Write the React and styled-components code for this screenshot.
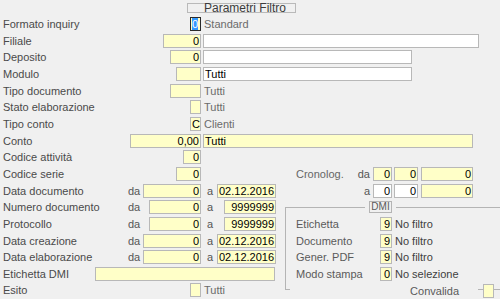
import React from "react";
import styled, { createGlobalStyle } from "styled-components";

const Global = createGlobalStyle`
  html, body { margin: 0; padding: 0; background: #f0f0f0; }
  body { font-family: "Liberation Sans", Arial, sans-serif; font-size: 11px; color: #4a4a4a; }
  * { box-sizing: border-box; }
`;

const ROW = 16.667;

const Page = styled.div`
  position: relative;
  width: 500px;
  height: 299px;
  overflow: hidden;
  background: #f0f0f0;
`;

const TitleRow = styled.div`
  height: 15.67px;
  padding-top: 2.5px;
`;

const TitleBox = styled.div`
  margin-left: 187px;
  width: 109px;
  height: 10px;
  border: 1px solid #b9b9b9;
  padding-left: 16px;
  font-size: 12px;
  line-height: 9px;
  color: #3c3c3c;
  white-space: nowrap;
  overflow: visible;
`;

const Row = styled.div`
  display: flex;
  align-items: center;
  height: ${ROW}px;
  gap: 2px;
`;

const Left = styled.div`
  display: flex;
  align-items: center;
  width: 201px;
  flex-shrink: 0;
`;

const Label = styled.span`
  padding-left: 3px;
  white-space: nowrap;
  color: #4a4a4a;
  ${(p) => (p.$w ? `width: ${p.$w}px; flex-shrink: 0;` : "flex: 1;")}
`;

const Field = styled.div`
  width: ${(p) => p.$w}px;
  height: 14px;
  flex-shrink: 0;
  border: 1px solid ${(p) => (p.$focus ? "#2a2a2a" : "#b8b8b8")};
  background: ${(p) => (p.$white ? "#ffffff" : "#ffffc8")};
  color: #000;
  font-size: 11px;
  line-height: 12px;
  padding: 0 1px 0 ${(p) => (p.$focus ? "1px" : "1px")};
  text-align: ${(p) => (p.$left ? "left" : "right")};
  white-space: nowrap;
  overflow: hidden;
`;

const Sel = styled.span`
  display: block;
  height: 12px;
  background: #3399ff;
  color: #fff;
  text-align: center;
  margin-right: 1px;
`;

const Info = styled.span`
  padding-left: 1px;
  color: ${(p) => (p.$dark ? "#404040" : "#6b6b6b")};
  white-space: nowrap;
`;

const DaGroup = styled.div`
  display: flex;
  align-items: center;
  justify-content: space-between;
  width: 73px;
  flex-shrink: 0;
`;

const AGroup = styled.div`
  display: flex;
  align-items: center;
  justify-content: space-between;
  width: 73px;
  flex-shrink: 0;
  padding-left: 4px;
`;

const Conj = styled.span`
  color: #555;
`;

const Lower = styled.div`
  display: flex;
`;

const LeftCol = styled.div`
  width: 283px;
  flex-shrink: 0;
`;

const RightCol = styled.div`
  flex: 1;
`;

const CronoRow = styled.div`
  display: flex;
  align-items: center;
  height: ${ROW}px;
`;

const CronoLabel = styled.span`
  margin-left: 13px;
  width: 61px;
  color: #666;
  white-space: nowrap;
`;

const CronoPrefix = styled.span`
  width: 13px;
  text-align: right;
  color: #555;
  margin-right: 3px;
`;

const Gap = styled.span`
  width: ${(p) => p.$w}px;
  flex-shrink: 0;
`;

const GroupBox = styled.div`
  position: relative;
  margin-left: 2px;
  margin-top: 7.67px;
  width: 240px;
  border: 1px solid #b4b4b4;
  border-right: none;
  padding-top: 8px;
  padding-bottom: 7.33px;
`;

const Legend = styled.span`
  position: absolute;
  top: -6.5px;
  left: 79px;
  padding: 0 4px;
  background: #f0f0f0;
`;

const LegendBox = styled.span`
  display: block;
  width: 23px;
  height: 12px;
  border: 1px solid #b4b4b4;
  font-size: 10px;
  line-height: 10px;
  color: #5a5a5a;
  text-align: center;
`;

const GroupRow = styled.div`
  display: flex;
  align-items: center;
  height: ${ROW}px;
  gap: 2px;
`;

const GroupLabel = styled.span`
  padding-left: 10px;
  width: 92px;
  color: #5a5a5a;
  white-space: nowrap;
`;

const Convalida = styled.div`
  position: absolute;
  left: 4px;
  bottom: -9.67px;
  height: ${ROW}px;
  display: flex;
  align-items: center;
`;

const ConvLabel = styled.span`
  width: 188px;
  height: 100%;
  display: flex;
  align-items: center;
  justify-content: flex-end;
  padding-right: 19px;
  background: #f0f0f0;
  color: #5a5a5a;
`;

const ConvBox = styled(Field)`
  margin-left: 5px;
  height: 14px;
`;

function DaRow({ label, daW, da, aW, a }) {
  return (
    <Row>
      <Left>
        <Label>{label}</Label>
        <DaGroup>
          <Conj>da</Conj>
          <Field $w={daW}>{da}</Field>
        </DaGroup>
      </Left>
      <AGroup>
        <Conj>a</Conj>
        <Field $w={aW}>{a}</Field>
      </AGroup>
    </Row>
  );
}

function DmiRow({ label, value, text }) {
  return (
    <GroupRow>
      <GroupLabel>{label}</GroupLabel>
      <Field $w={12}>{value}</Field>
      <Info $dark>{text}</Info>
    </GroupRow>
  );
}

export default function App() {
  return (
    <Page>
      <Global />
      <TitleRow>
        <TitleBox>Parametri Filtro</TitleBox>
      </TitleRow>

      <Row>
        <Left>
          <Label>Formato inquiry</Label>
          <Field $w={11} $focus>
            <Sel>0</Sel>
          </Field>
        </Left>
        <Info>Standard</Info>
      </Row>
      <Row>
        <Left>
          <Label>Filiale</Label>
          <Field $w={38}>0</Field>
        </Left>
        <Field $w={276} $white $left />
      </Row>
      <Row>
        <Left>
          <Label>Deposito</Label>
          <Field $w={31}>0</Field>
        </Left>
        <Field $w={209} $white $left />
      </Row>
      <Row>
        <Left>
          <Label>Modulo</Label>
          <Field $w={25} />
        </Left>
        <Field $w={209} $white $left>Tutti</Field>
      </Row>
      <Row>
        <Left>
          <Label>Tipo documento</Label>
          <Field $w={31} />
        </Left>
        <Info>Tutti</Info>
      </Row>
      <Row>
        <Left>
          <Label>Stato elaborazione</Label>
          <Field $w={11} />
        </Left>
        <Info>Tutti</Info>
      </Row>
      <Row>
        <Left>
          <Label>Tipo conto</Label>
          <Field $w={11}>C</Field>
        </Left>
        <Info>Clienti</Info>
      </Row>
      <Row>
        <Left>
          <Label>Conto</Label>
          <Field $w={71}>0,00</Field>
        </Left>
        <Field $w={270} $left>Tutti</Field>
      </Row>
      <Row>
        <Left>
          <Label>Codice attività</Label>
          <Field $w={18}>0</Field>
        </Left>
      </Row>

      <Lower>
        <LeftCol>
          <Row>
            <Left>
              <Label>Codice serie</Label>
              <Field $w={25}>0</Field>
            </Left>
          </Row>
          <DaRow label="Data documento" daW={58} da="0" aW={59} a="02.12.2016" />
          <DaRow label="Numero documento" daW={52} da="0" aW={52} a="9999999" />
          <DaRow label="Protocollo" daW={52} da="0" aW={52} a="9999999" />
          <DaRow label="Data creazione" daW={58} da="0" aW={59} a="02.12.2016" />
          <DaRow label="Data elaborazione" daW={58} da="0" aW={59} a="02.12.2016" />
          <Row>
            <Label $w={93}>Etichetta DMI</Label>
            <Field $w={180} />
          </Row>
          <Row>
            <Left>
              <Label>Esito</Label>
              <Field $w={11} />
            </Left>
            <Info>Tutti</Info>
          </Row>
        </LeftCol>

        <RightCol>
          <CronoRow>
            <CronoLabel>Cronolog.</CronoLabel>
            <CronoPrefix>da</CronoPrefix>
            <Field $w={19}>0</Field>
            <Gap $w={2} />
            <Field $w={24}>0</Field>
            <Gap $w={3} />
            <Field $w={52}>0</Field>
          </CronoRow>
          <CronoRow>
            <CronoLabel />
            <CronoPrefix>a</CronoPrefix>
            <Field $w={19} $white>0</Field>
            <Gap $w={2} />
            <Field $w={24} $white>0</Field>
            <Gap $w={3} />
            <Field $w={52}>0</Field>
          </CronoRow>
          <GroupBox>
            <Legend>
              <LegendBox>DMI</LegendBox>
            </Legend>
            <DmiRow label="Etichetta" value="9" text="No filtro" />
            <DmiRow label="Documento" value="9" text="No filtro" />
            <DmiRow label="Gener. PDF" value="9" text="No filtro" />
            <DmiRow label="Modo stampa" value="0" text="No selezione" />
            <Convalida>
              <ConvLabel>Convalida</ConvLabel>
              <ConvBox $w={11} />
            </Convalida>
          </GroupBox>
        </RightCol>
      </Lower>
    </Page>
  );
}
